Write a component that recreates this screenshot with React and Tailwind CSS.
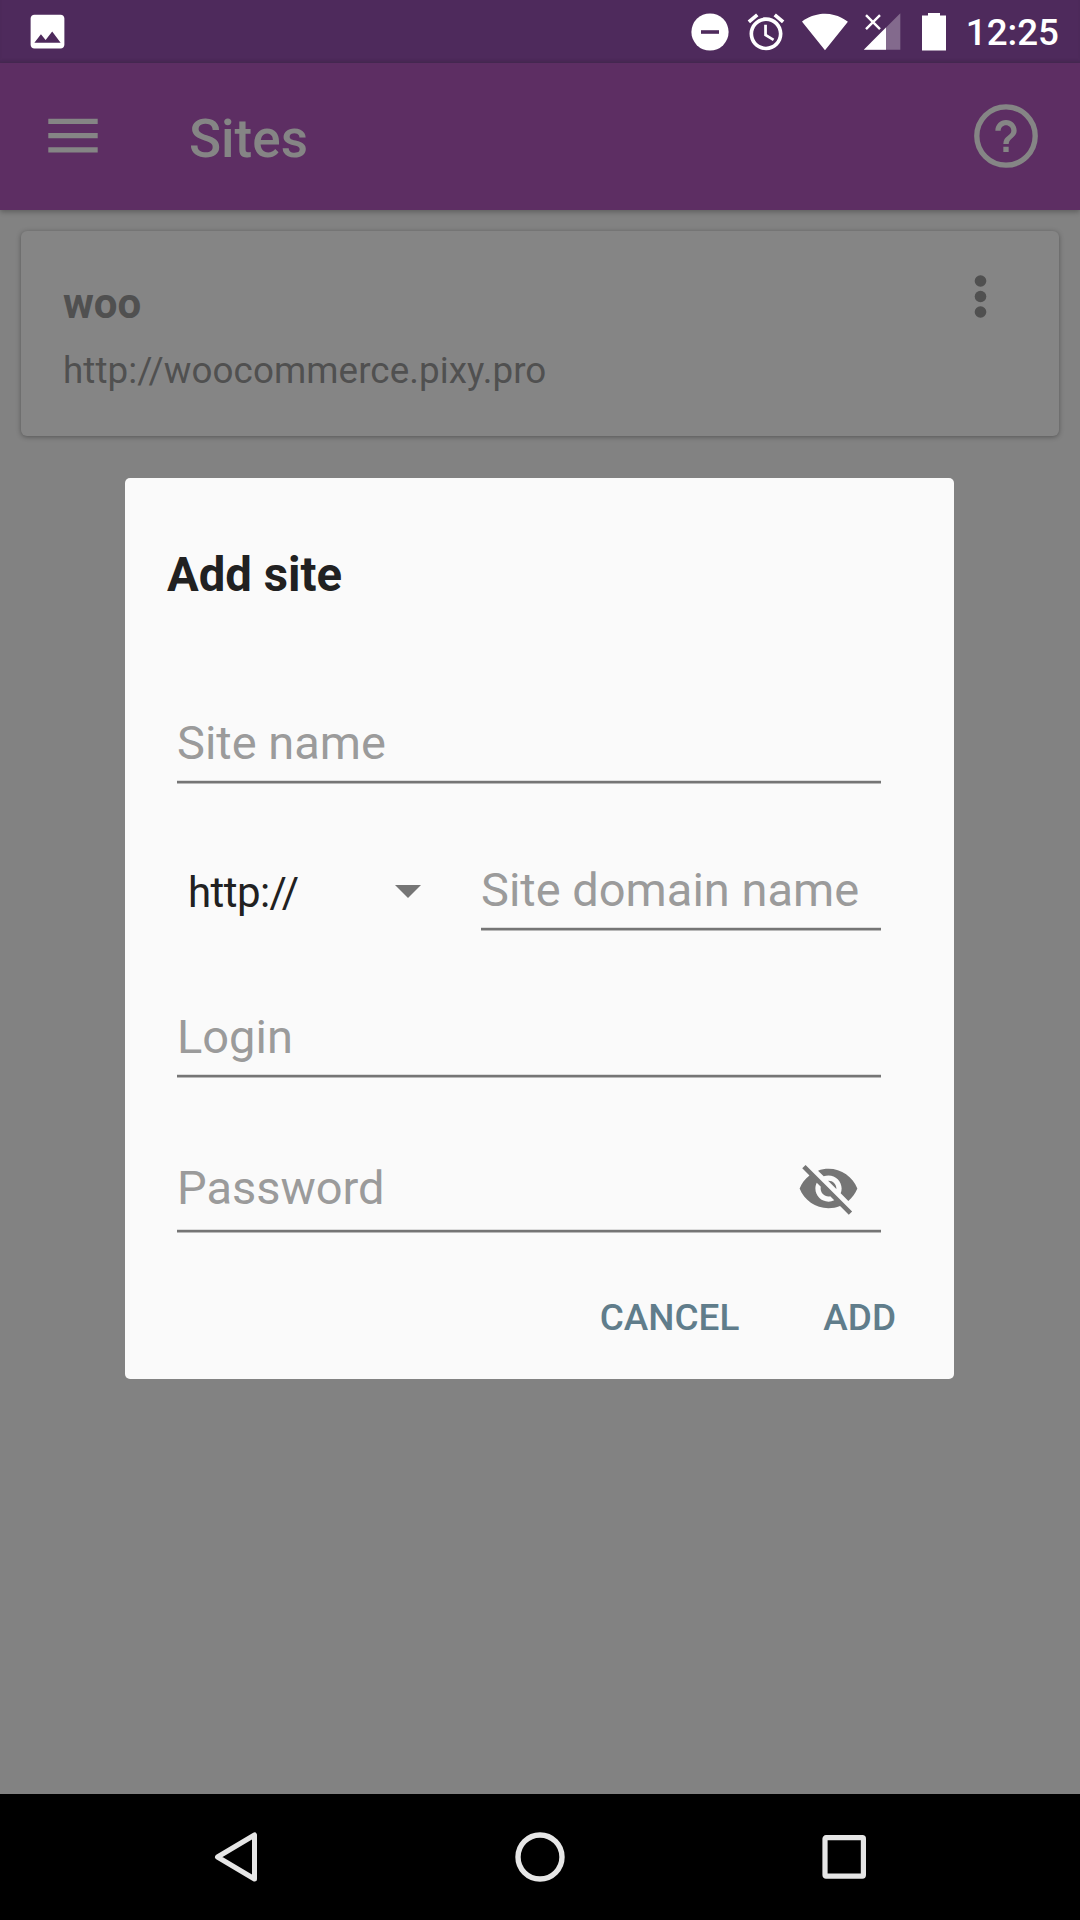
function ImageIcon() {
  return (
    <svg viewBox="0 0 24 24" className="w-[45px] h-[45px]" fill="#fff">
      <path d="M21 19V5c0-1.1-.9-2-2-2H5c-1.1 0-2 .9-2 2v14c0 1.1.9 2 2 2h14c1.1 0 2-.9 2-2zM8.5 13.5l2.5 3.01L14.5 12l4.5 6H5l3.5-4.5z" />
    </svg>
  );
}

function StatusBar() {
  return (
    <header className="flex h-[63px] items-center bg-[#4e2a5c] pl-[25px] pr-[21px] shadow-[inset_0_-3px_3px_-1px_rgba(60,40,70,0.35)]">
      <ImageIcon />
      <div className="ml-auto flex items-center">
        <svg viewBox="0 0 38 38" className="h-[38px] w-[38px]">
          <circle cx="19" cy="19" r="18.6" fill="#fff" />
          <path d="M10 19h18" stroke="#4e2a5c" strokeWidth="3.6" />
        </svg>
        <svg viewBox="0 0 24 24" className="ml-[15px] h-[44px] w-[44px]" fill="#fff">
          <path d="M22 5.72l-4.6-3.86-1.29 1.53 4.6 3.86L22 5.72zM7.88 3.39L6.6 1.86 2 5.71l1.29 1.53 4.59-3.85zM12.5 8H11v6l4.75 2.85.75-1.23-4-2.37V8zM12 4c-4.97 0-9 4.03-9 9s4.02 9 9 9c4.97 0 9-4.03 9-9s-4.03-9-9-9zm0 16c-3.87 0-7-3.13-7-7s3.13-7 7-7 7 3.13 7 7-3.13 7-7 7z" />
        </svg>
        <svg viewBox="0 0 26 24" className="ml-[13px] h-[44px] w-[48px]" fill="#fff">
          <path d="M13 22L25.5 6.4C25 6 20.1 2 13 2S.5 6 .5 6.4L13 22z" />
        </svg>
        <svg viewBox="0 0 38 38" className="ml-[14px] h-[38px] w-[38px]">
          <path d="M37.3 0.2V36.7H0.8z" fill="#fff" fillOpacity="0.3" />
          <path d="M23 14.5V36.7H0.8z" fill="#fff" />
          <path d="M3 2.2l14 14M17 2.2l-14 14" stroke="#fff" strokeWidth="2.4" />
        </svg>
        <svg viewBox="0 0 24 38" className="ml-[21px] h-[38px] w-[24px]" fill="#fff">
          <path d="M6 0h12v2.4h6v35H0v-35h6z" />
        </svg>
        <span className="ml-[20px] pt-[2px] text-[36.75px] leading-[44px] font-medium text-white">12:25</span>
      </div>
    </header>
  );
}

function AppBar() {
  return (
    <div className="relative flex h-[147px] items-center bg-[#5d2e63] pl-[48px] pr-[42px] shadow-[0_2px_5px_rgba(0,0,0,0.28)]">
      <svg viewBox="0 0 50 36" className="mb-[2px] h-[36px] w-[50px]" fill="#858585">
        <path d="M0.3 0.7h49.4v5.3H0.3zM0.3 15h49.4v5.3H0.3zM0.3 29.3h49.4v5.3H0.3z" />
      </svg>
      <h1 className="ml-[91px] pt-[5px] text-[53px] leading-[64px] font-medium text-[#858585]">Sites</h1>
      <svg viewBox="0 0 24 24" className="mb-[1px] ml-auto h-[64px] w-[64px]">
        <circle cx="12" cy="12" r="10.95" fill="none" stroke="#858585" strokeWidth="2" />
        <path
          fill="#858585"
          d="M11 18h2v-2h-2v2zm1-12c-2.21 0-4 1.79-4 4h2c0-1.1.9-2 2-2s2 .9 2 2c0 2-3 1.75-3 5h2c0-2.25 3-2.5 3-5 0-2.21-1.79-4-4-4z"
        />
      </svg>
    </div>
  );
}

function SiteCard() {
  return (
    <section className="mx-[21px] mt-[21px] flex h-[205px] justify-between rounded-[6px] bg-[#858585] pl-[42px] pr-[72px] text-[#505050] shadow-[0_1px_5px_rgba(0,0,0,0.35)]">
      <div className="pt-[43px]">
        <h2 className="text-[42px] leading-[60px] font-bold">woo</h2>
        <p className="mt-[7px] text-[36.75px] leading-[60px] tracking-[0.09px]">http://woocommerce.pixy.pro</p>
      </div>
      <svg viewBox="0 0 13 44" className="mt-[43px] h-[44px] w-[13px]" fill="#505050">
        <circle cx="6.5" cy="7" r="5.8" />
        <circle cx="6.5" cy="22.5" r="5.8" />
        <circle cx="6.5" cy="38" r="5.8" />
      </svg>
    </section>
  );
}

function Underline() {
  return (
    <div className="h-[4px] border-t border-b border-t-[#dcdcdc] border-b-[#b9b9b9] bg-[#757575]" />
  );
}

function Field({ label }) {
  return (
    <div className="flex-1">
      <div className="mb-[5px] text-[47px] leading-[64px] whitespace-nowrap">{label}</div>
      <Underline />
    </div>
  );
}

function AddSiteDialog() {
  return (
    <div role="dialog" className="h-[901px] w-[829px] rounded-[5px] bg-[#fafafa]">
      <h2 className="pt-[65px] pl-[42px] text-[47.25px] leading-[64px] font-bold text-[#212121]">Add site</h2>
      <div className="mt-[104px] mr-[73px] ml-[52px] text-[#9b9b9b]">
        <Field label="Site name" />
        <div className="mt-[74px] flex">
          <div className="flex w-[304px] items-start justify-between pr-[60px] pl-[11px]">
            <span className="pt-[3px] text-[42px] leading-[64px] tracking-[-0.55px] text-[#212121]">http://</span>
            <svg viewBox="0 0 26 13" className="mt-[27px] h-[13px] w-[26px] shrink-0" fill="#757575">
              <path d="M0 0h26L13 13z" />
            </svg>
          </div>
          <Field label="Site domain name" />
        </div>
        <div className="mt-[74px]">
          <Field label="Login" />
        </div>
        <div className="mt-[78px] mb-[9px] flex h-[64px] items-center justify-between pr-[21px] text-[47px] leading-[64px]">
          <span>Password</span>
          <svg viewBox="0 0 24 24" className="mt-[1px] h-[63px] w-[63px]" fill="#757575">
            <path d="M12 7c2.76 0 5 2.24 5 5 0 .65-.13 1.26-.36 1.83l2.92 2.92c1.51-1.26 2.7-2.89 3.43-4.75-1.73-4.39-6-7.5-11-7.5-1.4 0-2.74.25-3.98.7l2.16 2.16C10.74 7.13 11.35 7 12 7zM2 4.27l2.28 2.28.46.46C3.08 8.3 1.78 10.02 1 12c1.73 4.39 6 7.5 11 7.5 1.55 0 3.03-.3 4.38-.84l.42.42L19.73 22 21 20.73 3.27 3 2 4.27zM7.53 9.8l1.55 1.55c-.05.21-.08.43-.08.65 0 1.66 1.34 3 3 3 .22 0 .44-.03.65-.08l1.55 1.55c-.67.33-1.41.53-2.2.53-2.76 0-5-2.24-5-5 0-.79.2-1.53.53-2.2zm4.31-.78l3.15 3.15.02-.16c0-1.66-1.34-3-3-3l-.17.01z" />
          </svg>
        </div>
        <Underline />
      </div>
      <div className="mt-[55px] flex justify-end gap-[84px] pr-[58px] text-[36.9px] leading-[60px] font-medium text-[#607d8b]">
        <button>CANCEL</button>
        <button>ADD</button>
      </div>
    </div>
  );
}

function NavBar() {
  return (
    <nav className="flex h-[126px] items-center justify-between bg-black pr-[213px] pl-[213px]">
      <svg viewBox="0 0 46 52" className="h-[52px] w-[46px]">
        <path d="M41.5 4V48L4.5 26z" fill="none" stroke="#e6e6e6" strokeWidth="5" strokeLinejoin="round" />
      </svg>
      <svg viewBox="0 0 52 52" className="h-[52px] w-[52px]">
        <circle cx="26" cy="26" r="22" fill="none" stroke="#e6e6e6" strokeWidth="5.4" />
      </svg>
      <svg viewBox="0 0 46 52" className="h-[52px] w-[46px]">
        <rect x="4" y="6.7" width="38.4" height="38.4" rx="1" fill="none" stroke="#e6e6e6" strokeWidth="5.2" />
      </svg>
    </nav>
  );
}

export default function App() {
  return (
    <div className="relative flex h-[1920px] w-[1080px] flex-col overflow-hidden bg-[#828282] font-['Roboto',sans-serif]">
      <StatusBar />
      <AppBar />
      <main className="flex-1">
        <SiteCard />
      </main>
      <NavBar />
      <div className="absolute top-[63px] left-0 flex h-[1731px] w-[1079px] items-center justify-center">
        <AddSiteDialog />
      </div>
    </div>
  );
}
